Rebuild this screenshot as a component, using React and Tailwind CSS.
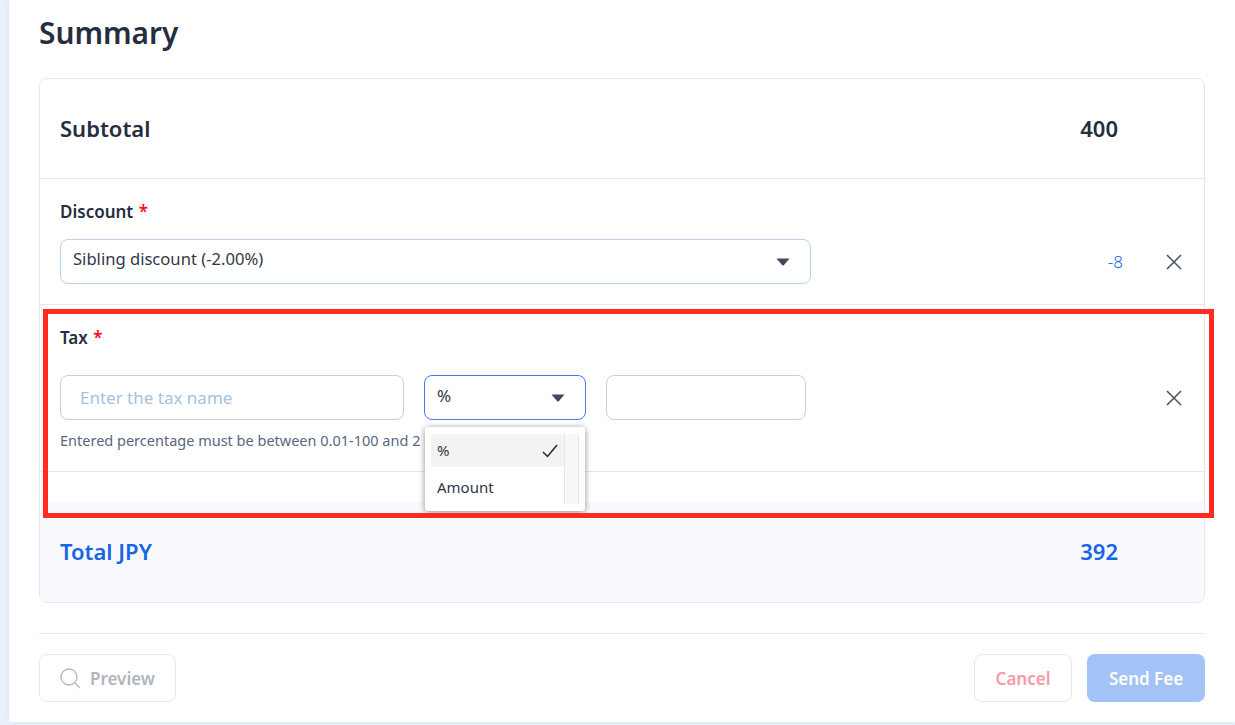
import React from "react";

const Caret = () => (
  <svg width="14" height="8" viewBox="0 0 14 8" className="block">
    <path d="M0.5 0.5H13.5L8 7a1.3 1.3 0 0 1-2 0Z" fill="#3f4a5c" />
  </svg>
);

const X = () => (
  <svg width="16" height="16" viewBox="0 0 16 16" fill="none" stroke="#4b5563" strokeWidth="1.6" className="block">
    <path d="M1 1 15 15M15 1 1 15" />
  </svg>
);

const Star = () => <span className="text-[#ff0f1f] ml-[1px]">*</span>;

export default function App() {
  return (
    <div className="relative h-[725px] w-[1235px] overflow-hidden bg-[#e9f0fc] pl-[9px] pb-[3px] font-['Noto_Sans','Open_Sans',sans-serif] text-[#252d3f]">
      <div className="h-full bg-white px-[30px] flex flex-col shadow-[0_0_4px_rgba(200,210,230,0.4)]">
        <h1 className="h-[78px] pt-[12px] text-[29.8px] leading-[42px] font-semibold">Summary</h1>

        <div className="h-[525px] rounded-[8px] border border-[#e5e8f0] flex flex-col overflow-hidden">
          <div className="h-[100px] shrink-0 border-b border-[#e5e8f0] pl-[20px] pr-[86px] pb-[1px] flex items-center justify-between text-[22px] font-semibold">
            <span>Subtotal</span>
            <span>400</span>
          </div>

          <div className="h-[126px] shrink-0 border-b border-[#e5e8f0] pl-[20px] pr-[22px] pt-[21px]">
            <div className="text-[17px] leading-[24px] font-semibold">Discount <Star /></div>
            <div className="mt-[15px] flex items-center">
              <div className="w-[751px] h-[45px] rounded-[8px] border border-[#bcd4ec] pl-[12px] pr-[20px] flex items-center justify-between text-[16.6px] text-[#303848]">
                <span className="relative -top-[2px]">Sibling discount (-2.00%)</span>
                <Caret />
              </div>
              <span className="ml-auto mr-[43px] text-[17px] font-light text-[#1e66e8]">-8</span>
              <X />
            </div>
          </div>

          <div className="h-[167px] shrink-0 border-b border-[#e5e8f0] pl-[20px] pr-[22px] pt-[21px]">
            <div className="text-[17px] leading-[24px] font-semibold">Tax <Star /></div>
            <div className="mt-[25px] flex items-center">
              <div className="w-[344px] h-[45px] rounded-[8px] border border-[#c8cedd] pl-[19px] flex items-center text-[17px] text-[#a8c0de]">
                Enter the tax name
              </div>
              <div className="ml-[20px] w-[162px] h-[45px] rounded-[8px] border border-[#3f7fe8] pl-[12px] pr-[20px] flex items-center justify-between text-[17px] text-[#303848]">
                <span className="relative -top-[2px]">%</span>
                <Caret />
              </div>
              <div className="ml-[20px] w-[200px] h-[45px] rounded-[8px] border border-[#c8cedd]" />
              <span className="ml-auto"><X /></span>
            </div>
            <p className="mt-[10px] text-[14.5px] leading-[20px] text-[#5a6680]">Entered percentage must be between 0.01-100 and 2</p>
          </div>

          <div className="h-[30px] shrink-0" />

          <div className="flex-1 bg-[#f8f9fc] pl-[20px] pr-[86px] pt-[29px] flex items-start justify-between text-[22px] leading-[40px] font-semibold text-[#1766e4]">
            <span>Total JPY</span>
            <span>392</span>
          </div>
        </div>

        <div className="mt-[30px] border-t border-[#e5e8f0] pt-[20px] flex items-start">
          <div className="w-[137px] h-[48px] rounded-[8px] border border-[#e5e8f0] flex items-center pl-[20px] text-[17px] font-semibold text-[#b0b5c0]">
            <svg width="21" height="21" viewBox="0 0 21 21" fill="none" stroke="#b0b5c0" strokeWidth="1.3" className="mr-[9px]">
              <circle cx="9" cy="9" r="8" />
              <path d="M15 15l5 5" />
            </svg>
            <span className="relative top-[1px]">Preview</span>
          </div>
          <div className="ml-auto w-[98px] h-[48px] rounded-[8px] border border-[#e5e8f0] flex items-center justify-center text-[17px] font-semibold text-[#f59aa6]">
            <span className="relative top-[1px]">Cancel</span>
          </div>
          <div className="ml-[15px] w-[118px] h-[48px] rounded-[8px] bg-[#a3c2f5] flex items-center justify-center text-[17px] font-semibold text-white">
            <span className="relative top-[1px]">Send Fee</span>
          </div>
        </div>
      </div>

      <div className="absolute left-[425px] top-[427px] w-[160px] h-[84px] rounded-[3px] bg-white shadow-[0_1px_6px_rgba(0,0,0,0.45)] pl-[6px] pt-[7px] flex text-[#303848]">
        <div className="w-[133px]">
          <div className="h-[33px] rounded-[3px] bg-[#f3f3f3] pl-[6px] pr-[6px] flex items-center justify-between text-[15px]">
            <span>%</span>
            <svg width="16" height="14" viewBox="0 0 16 14" fill="none" stroke="#1f2530" strokeWidth="1.5"><path d="M1 8l4.5 4.5L15 1" /></svg>
          </div>
          <div className="h-[41px] pl-[6px] flex items-center text-[15px]">Amount</div>
        </div>
        <div className="w-[15px] h-[70px] bg-[#f8f8f8] border-x border-[#e6e6e6]" />
      </div>

      <div className="absolute left-[43px] top-[309px] w-[1171px] h-[209px] border-[5px] border-[#ff2a20] pointer-events-none" />
    </div>
  );
}
